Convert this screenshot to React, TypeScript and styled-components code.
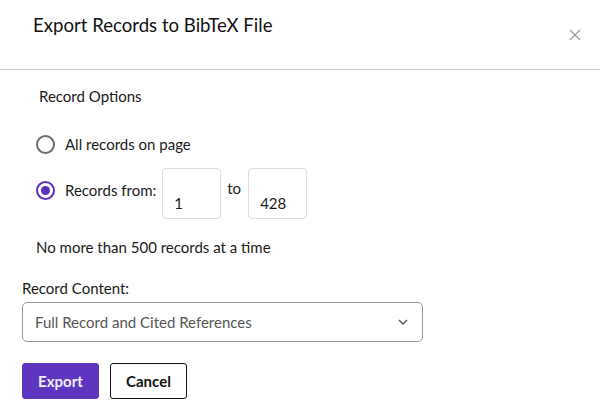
import React from "react";
import styled, { createGlobalStyle } from "styled-components";

const Global = createGlobalStyle`
  html, body { margin: 0; padding: 0; background: #fff; }
  body { font-family: "Lato", "Noto Sans", sans-serif; color: #1a1a1a; }
  * { box-sizing: border-box; }
`;

const Dialog = styled.div`
  width: 600px;
  height: 420px;
  background: #fff;
  display: flex;
  flex-direction: column;
`;

const Header = styled.header`
  height: 70px;
  border-bottom: 1px solid #c6c6c6;
  display: flex;
  align-items: flex-start;
  justify-content: space-between;
  padding: 12px 18px 0 33px;
`;

const Title = styled.h2`
  margin: 0;
  font-size: 18.6px;
  font-weight: 400;
  line-height: 26px;
  color: #111;
`;

const Close = styled.button`
  border: none;
  background: none;
  padding: 0;
  margin-top: 16px;
  width: 14px;
  height: 14px;
  display: flex;
  cursor: pointer;
`;

const Body = styled.div`
  padding: 16px 22px 0 22px;
  display: flex;
  flex-direction: column;
`;

const OptionsGroup = styled.fieldset`
  border: none;
  margin: 0;
  padding: 0 0 0 14px;
  display: flex;
  flex-direction: column;
`;

const Legend = styled.div`
  padding-left: 3px;
  font-size: 15px;
  line-height: 20px;
`;

const RadioRow = styled.label<{ $top: number }>`
  display: flex;
  align-items: center;
  gap: 10px;
  margin-top: ${(p) => p.$top}px;
  font-size: 15px;
  line-height: 20px;
  cursor: pointer;
`;

const RadioDot = styled.span<{ $checked?: boolean }>`
  width: 19px;
  height: 19px;
  border-radius: 50%;
  border: 2px solid ${(p) => (p.$checked ? "#5b2fc0" : "#6b6b6b")};
  display: flex;
  align-items: center;
  justify-content: center;
  flex-shrink: 0;
  &::after {
    content: "";
    width: 9px;
    height: 9px;
    border-radius: 50%;
    background: ${(p) => (p.$checked ? "#5b2fc0" : "transparent")};
  }
`;

const RangeGroup = styled.div`
  display: flex;
  align-items: center;
  gap: 6px;
  margin: 7px 0 0 -4px;
`;

const RangeInput = styled.div`
  width: 59px;
  height: 51px;
  border: 1px solid #dcdcdc;
  border-radius: 4px;
  padding: 24px 0 0 11px;
  font-size: 15px;
  line-height: 20px;
`;

const RangeWord = styled.span`
  margin-top: -12px;
  padding-right: 1px;
`;

const Note = styled.div`
  margin-top: 18px;
  font-size: 15px;
  line-height: 20px;
`;

const FieldLabel = styled.div`
  margin-top: 21px;
  font-size: 15px;
  line-height: 20px;
`;

const Select = styled.div`
  margin-top: 4px;
  width: 401px;
  height: 40px;
  border: 1px solid #9a9a9a;
  border-radius: 5px;
  display: flex;
  align-items: center;
  justify-content: space-between;
  padding: 0 14px 0 12px;
  font-size: 15px;
  color: #555;
`;

const Actions = styled.div`
  margin-top: 21px;
  display: flex;
  gap: 11px;
`;

const Button = styled.button<{ $primary?: boolean }>`
  width: 77px;
  height: 36px;
  border-radius: 3px;
  font-family: inherit;
  font-size: 15px;
  font-weight: 700;
  cursor: pointer;
  border: 1px solid ${(p) => (p.$primary ? "#5e35be" : "#111")};
  background: ${(p) => (p.$primary ? "#5e35be" : "#fff")};
  color: ${(p) => (p.$primary ? "#f3effb" : "#111")};
`;

export default function App() {
  return (
    <Dialog>
      <Global />
      <Header>
        <Title>Export Records to BibTeX File</Title>
        <Close aria-label="Close">
          <svg width="14" height="14" viewBox="0 0 14 14">
            <path d="M2 2 L12 12 M12 2 L2 12" stroke="#9a9a9a" strokeWidth="1.4" />
          </svg>
        </Close>
      </Header>
      <Body>
        <OptionsGroup>
          <Legend>Record Options</Legend>
          <RadioRow $top={28}>
            <RadioDot />
            All records on page
          </RadioRow>
          <RadioRow $top={7}>
            <RadioDot $checked />
            Records from:
            <RangeGroup>
              <RangeInput>1</RangeInput>
              <RangeWord>to</RangeWord>
              <RangeInput>428</RangeInput>
            </RangeGroup>
          </RadioRow>
          <Note>No more than 500 records at a time</Note>
        </OptionsGroup>
        <FieldLabel>Record Content:</FieldLabel>
        <Select>
          Full Record and Cited References
          <svg width="10" height="6" viewBox="0 0 10 6">
            <path d="M1 1 L5 5 L9 1" fill="none" stroke="#555" strokeWidth="1.4" />
          </svg>
        </Select>
        <Actions>
          <Button $primary>Export</Button>
          <Button>Cancel</Button>
        </Actions>
      </Body>
    </Dialog>
  );
}
